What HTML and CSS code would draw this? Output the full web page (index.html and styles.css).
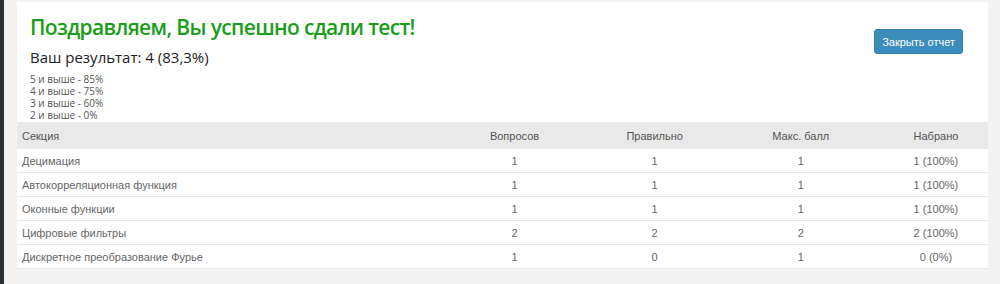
FILE: index.html
```html
<!DOCTYPE html>
<html lang="ru">
<head>
    <meta charset="UTF-8">
    <title>Результат теста</title>
    <link rel="stylesheet" href="styles.css">
</head>
<body>
    <div class="sidebar"></div>

    <main>
        <div class="report">
            <div class="report-head">
                <div class="summary">
                    <h1 class="passed">Поздравляем, Вы успешно сдали тест!</h1>
                    <p class="score">Ваш результат: 4 (83,3%)</p>
                    <ul class="scale">
                        <li>5 и выше - 85%</li>
                        <li>4 и выше - 75%</li>
                        <li>3 и выше - 60%</li>
                        <li>2 и выше - 0%</li>
                    </ul>
                </div>
                <button class="btn-close">Закрыть отчет</button>
            </div>

            <!-- results by section -->
            <table class="results">
                <thead>
                    <tr>
                        <th class="col-name">Секция</th>
                        <th class="col-q">Вопросов</th>
                        <th class="col-ok">Правильно</th>
                        <th class="col-max">Макс. балл</th>
                        <th class="col-got">Набрано</th>
                    </tr>
                </thead>
                <tbody>
                    <tr><td>Децимация</td><td>1</td><td>1</td><td>1</td><td>1 (100%)</td></tr>
                    <tr><td>Автокорреляционная функция</td><td>1</td><td>1</td><td>1</td><td>1 (100%)</td></tr>
                    <tr><td>Оконные функции</td><td>1</td><td>1</td><td>1</td><td>1 (100%)</td></tr>
                    <tr><td>Цифровые фильтры</td><td>2</td><td>2</td><td>2</td><td>2 (100%)</td></tr>
                    <tr><td>Дискретное преобразование Фурье</td><td>1</td><td>0</td><td>1</td><td>0 (0%)</td></tr>
                </tbody>
            </table>
        </div>
    </main>
</body>
</html>
```

FILE: styles.css
```css
body {
    margin: 0;
    display: flex;
    min-height: 284px;
    background-color: #f3f3f3;
    font-family: "Open Sans", Arial, sans-serif;
}
.sidebar {
    width: 4px;
    background-color: #2b3035;
}
main {
    flex: 1;
    padding: 2px 12px 0 13px;
}
.report {
    background-color: #fff;
}
.report-head {
    display: flex;
    justify-content: space-between;
    align-items: flex-start;
    padding: 10px 25px 0 13px;
}
.passed {
    margin: 0;
    color: #1a9e1a;
    font-size: 21px;
    font-weight: 600;
    letter-spacing: -0.65px;
    line-height: 30px;
}
.score {
    margin: 5px 0 6px;
    color: #222;
    font-size: 15px;
    line-height: 20px;
}
.scale {
    list-style: none;
    margin: 0;
    padding: 0;
    color: #555;
    font-size: 10px;
    line-height: 12px;
}
.btn-close {
    margin-top: 17px;
    padding: 0 7px;
    height: 25px;
    border: 1px solid #367fa9;
    border-radius: 3px;
    background-color: #3c8dbc;
    color: #fff;
    font-family: "Liberation Sans", Arial, sans-serif;
    font-size: 11px;
}
.results {
    width: 100%;
    margin-top: 1px;
    border-collapse: collapse;
    font-family: "Liberation Sans", Arial, sans-serif;
    font-size: 11px;
    color: #666;
}
.results th {
    height: 27px;
    padding: 0 5px;
    background-color: #e9e9e9;
    color: #555;
    font-weight: normal;
    text-align: center;
}
.results td {
    height: 23px;
    padding: 0 5px;
    border-bottom: 1px solid #e3e9e9;
    text-align: center;
}
.results th.col-name,
.results td:first-child {
    text-align: left;
}
.col-name { width: 410px; }
.col-q { width: 144px; }
.col-ok { width: 116px; }
.col-max { width: 156px; }
.col-got { width: 94px; }
```
